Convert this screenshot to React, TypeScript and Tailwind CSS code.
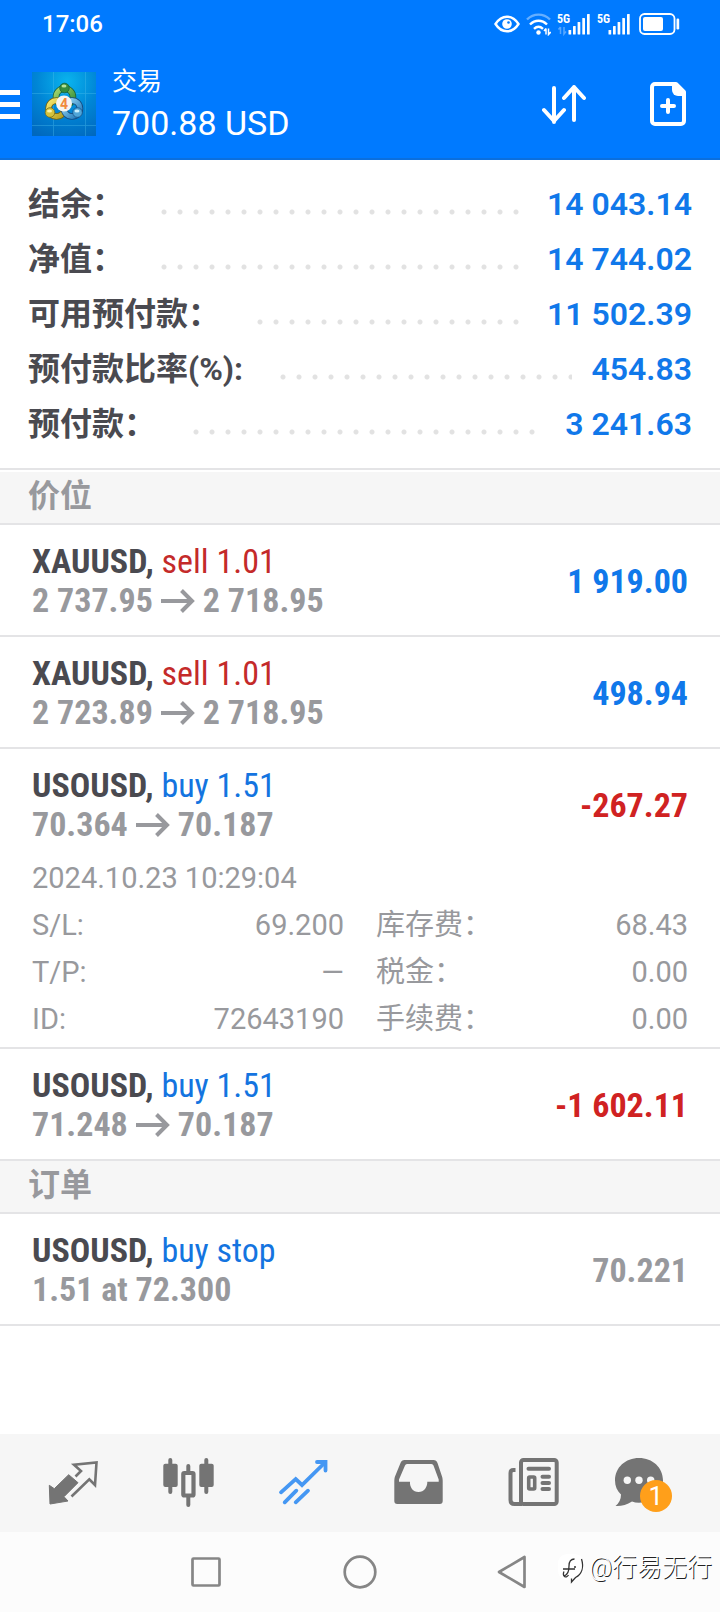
import type { ReactNode } from "react";

const summary = [
  { label: "结余：", value: "14 043.14" },
  { label: "净值：", value: "14 744.02" },
  { label: "可用预付款：", value: "11 502.39" },
  { label: "预付款比率(%):", value: "454.83" },
  { label: "预付款：", value: "3 241.63" },
];

type Position = {
  id: string;
  symbol: string;
  side: "buy" | "sell";
  volume: string;
  open: string;
  current: string;
  profit: string;
  details?: { time: string; rows: string[][] };
};

const positions: Position[] = [
  { id: "p1", symbol: "XAUUSD", side: "sell", volume: "1.01", open: "2 737.95", current: "2 718.95", profit: "1 919.00" },
  { id: "p2", symbol: "XAUUSD", side: "sell", volume: "1.01", open: "2 723.89", current: "2 718.95", profit: "498.94" },
  {
    id: "p3",
    symbol: "USOUSD",
    side: "buy",
    volume: "1.51",
    open: "70.364",
    current: "70.187",
    profit: "-267.27",
    details: {
      time: "2024.10.23 10:29:04",
      rows: [
        ["S/L:", "69.200", "库存费：", "68.43"],
        ["T/P:", "—", "税金：", "0.00"],
        ["ID:", "72643190", "手续费：", "0.00"],
      ],
    },
  },
  { id: "p4", symbol: "USOUSD", side: "buy", volume: "1.51", open: "71.248", current: "70.187", profit: "-1 602.11" },
];

function Signal({ data = false }: { data?: boolean }) {
  return (
    <svg width="34" height="24" viewBox="0 0 34 24" fill="currentColor" aria-hidden="true">
      <text x="0" y="11" fontSize="12" fontWeight="700" className="font-['Roboto_Condensed','Roboto',sans-serif]">
        5G
      </text>
      {data && (
        <path d="M3.500 15v7M3.500 15l-2 2.500M7 15v7l2-2.500" stroke="currentColor" strokeWidth="1.500" fill="none" opacity="0.350" />
      )}
      <rect x="11.500" y="18" width="2.700" height="4.500" rx="0.600" />
      <rect x="16" y="14" width="2.700" height="8.500" rx="0.600" />
      <rect x="20.600" y="10" width="2.700" height="12.500" rx="0.600" />
      <rect x="25.300" y="6" width="2.700" height="16.500" rx="0.600" />
      <rect x="30" y="2" width="2.700" height="20.500" rx="0.600" />
    </svg>
  );
}

function StatusBar() {
  return (
    <div className="flex h-12 items-center justify-between pl-[42px] pr-10">
      <span className="text-2xl font-medium">17:06</span>
      <div className="flex items-center gap-[6px]">
        <svg width="26" height="24" viewBox="0 0 26 24" fill="none" aria-hidden="true">
          <path d="M1.500 12C5 6.500 9 4.700 13 4.700S21 6.500 24.500 12C21 17.500 17 19.300 13 19.300S5 17.500 1.500 12Z" stroke="currentColor" strokeWidth="2.400" />
          <circle cx="13" cy="12" r="4.800" fill="currentColor" />
          <circle cx="14.500" cy="10.500" r="1.300" fill="#007aff" />
        </svg>
        <svg width="25" height="24" viewBox="0 0 25 24" fill="none" stroke="currentColor" aria-hidden="true">
          <path d="M1 7.500C7.500 1 17.500 1 24 7.500" strokeWidth="2.400" opacity="0.400" />
          <path d="M4 12.500C9 7.500 16 7.500 21 12.500" strokeWidth="2.400" />
          <path d="M8 16.800C11 14 14 14 17 16.800" strokeWidth="2.400" />
          <circle cx="12.500" cy="20.500" r="2.200" fill="currentColor" stroke="none" />
          <path d="M20 16.500v6M20 16.500l-2 2.500M22.500 16.500v6l2.300-2.500" strokeWidth="1.500" />
        </svg>
        <Signal data />
        <Signal />
        <svg className="ml-[2px]" width="41" height="24" viewBox="0 0 41 24" aria-hidden="true">
          <rect x="1" y="2" width="34.500" height="20" rx="4.500" fill="none" stroke="currentColor" strokeWidth="1.800" />
          <rect x="4" y="5" width="20" height="14" rx="2" fill="currentColor" />
          <rect x="37.500" y="6.500" width="2.700" height="11" rx="1.200" fill="currentColor" />
        </svg>
      </div>
    </div>
  );
}

function AppLogo() {
  return (
    <svg width="64" height="64" viewBox="0 0 64 64" aria-hidden="true">
      <defs>
        <radialGradient id="sky" cx="0.550" cy="0.150" r="0.950">
          <stop offset="0" stopColor="#0ab4ee" />
          <stop offset="0.500" stopColor="#0086d6" />
          <stop offset="1" stopColor="#0068be" />
        </radialGradient>
        <linearGradient id="leaf" x1="0" y1="0" x2="1" y2="1">
          <stop offset="0" stopColor="#a5d66e" />
          <stop offset="1" stopColor="#2a8a35" />
        </linearGradient>
        <linearGradient id="gold" x1="0" y1="0" x2="1" y2="1">
          <stop offset="0" stopColor="#f4e66c" />
          <stop offset="1" stopColor="#b39d1e" />
        </linearGradient>
        <linearGradient id="sea" x1="0" y1="0" x2="1" y2="1">
          <stop offset="0" stopColor="#9cdcf7" />
          <stop offset="1" stopColor="#1c74b8" />
        </linearGradient>
      </defs>
      <rect width="64" height="64" fill="url(#sky)" />
      <path d="M21.500 0v64M53.500 0v64M0 21.500h64M0 53.500h64" stroke="#4fc0ee" strokeWidth="0.800" opacity="0.450" />
      <g fill="none">
        <circle cx="32.500" cy="25" r="8.500" stroke="#155c35" strokeWidth="6.500" />
        <circle cx="32.500" cy="25" r="8.500" stroke="url(#leaf)" strokeWidth="5" />
        <circle cx="24.500" cy="36.500" r="8" stroke="#6f6415" strokeWidth="6.500" />
        <circle cx="24.500" cy="36.500" r="8" stroke="url(#gold)" strokeWidth="5" />
        <circle cx="40" cy="36.500" r="8" stroke="#164a80" strokeWidth="6.500" />
        <circle cx="40" cy="36.500" r="8" stroke="url(#sea)" strokeWidth="5" />
      </g>
      <circle cx="32.500" cy="16" r="4.800" fill="#358c3d" stroke="#155c35" strokeWidth="0.700" />
      <ellipse cx="32" cy="14" rx="2.500" ry="1.500" fill="#b9e39a" />
      <circle cx="18" cy="40.500" r="4.800" fill="#d4c23c" stroke="#6f6415" strokeWidth="0.700" />
      <ellipse cx="17.500" cy="39" rx="2.500" ry="1.500" fill="#fbf4a6" />
      <circle cx="45.500" cy="40.500" r="4.800" fill="#4fa5d8" stroke="#164a80" strokeWidth="0.700" />
      <ellipse cx="45" cy="39" rx="2.500" ry="1.500" fill="#c9eefc" />
      <circle cx="32" cy="31.500" r="8" fill="#f6f4f0" />
      <text x="32" y="36.500" textAnchor="middle" fontSize="14" fontWeight="700" fill="#f08a3c" className="font-['Roboto',sans-serif]">
        4
      </text>
    </svg>
  );
}

function Header() {
  return (
    <header className="border-b-2 border-[#0b6fdd] bg-[#007aff] text-white">
      <StatusBar />
      <div className="flex h-[110px] items-center pr-[34px] pt-[2px]">
        <button type="button" aria-label="Menu" className="flex w-5 flex-col gap-[7px]">
          <span className="h-[5px] w-full bg-white" />
          <span className="h-[5px] w-full bg-white" />
          <span className="h-[5px] w-full bg-white" />
        </button>
        <div className="ml-3">
          <AppLogo />
        </div>
        <div className="ml-4 flex-1 pt-[2px]">
          <h1 className="text-[25px] leading-9">交易</h1>
          <p className="text-[34px] leading-[46px]">700.88 USD</p>
        </div>
        <button type="button" aria-label="Sort">
          <svg width="44" height="44" viewBox="0 0 44 44" fill="none" stroke="currentColor" strokeWidth="4" strokeLinecap="round" strokeLinejoin="round">
            <path d="M12 6v34M2 28l10 11 10-11" />
            <path d="M32 38V5M22 16L32 5l10 11" />
          </svg>
        </button>
        <button type="button" aria-label="New order" className="ml-16">
          <svg width="36" height="44" viewBox="0 0 36 44" fill="none">
            <path d="M5 2H26L34 10V39a3 3 0 0 1-3 3H5a3 3 0 0 1-3-3V5a3 3 0 0 1 3-3Z" stroke="currentColor" strokeWidth="4" strokeLinejoin="round" />
            <path d="M22 2v6a6 6 0 0 0 6 6h7V10L27 2Z" fill="currentColor" />
            <path d="M18 18v12M12 24h12" stroke="currentColor" strokeWidth="4" strokeLinecap="round" />
          </svg>
        </button>
      </div>
    </header>
  );
}

function SectionTitle({ children }: { children: ReactNode }) {
  return (
    <h2 className="h-[53px] border-b-2 border-[#e4e4e6] bg-[#f6f6f6] px-7 text-[32px] font-bold leading-[49px] text-[#98999d]">
      {children}
    </h2>
  );
}

function Summary() {
  return (
    <dl className="border-b-2 border-[#e4e4e6] px-7 pb-4 pt-[17px]">
      {summary.map((row) => (
        <div key={row.label} className="flex h-[55px] items-center text-[32px] leading-[55px]">
          <dt className="font-bold text-[#4a4a50]">{row.label}</dt>
          <div className="ml-8 mr-5 mt-3.5 h-4 flex-1 bg-[radial-gradient(circle,#e2e2e2_2px,transparent_3px)] bg-[length:16px_16px]" />
          <dd className="font-semibold text-[#1078ea]">{row.value}</dd>
        </div>
      ))}
    </dl>
  );
}

function PriceArrow() {
  return (
    <svg width="34" height="24" viewBox="0 0 34 24" fill="none" stroke="currentColor" strokeWidth="4" aria-hidden="true">
      <path d="M0 12h31M20.500 1.500L31 12 20.500 22.500" />
    </svg>
  );
}

function PositionRow({ item }: { item: Position }) {
  const loss = item.profit.startsWith("-");
  return (
    <li className="border-b-2 border-[#e4e4e6] px-8">
      <div className="flex h-[110px] items-center justify-between pt-[2px] font-['Roboto_Condensed','Roboto',sans-serif] text-[34px] leading-[39px]">
        <div>
          <p>
            <span className="font-bold text-[#4a4a50]">{item.symbol}, </span>
            <span className={item.side === "buy" ? "text-[#1474e0]" : "text-[#c42a2a]"}>
              {item.side} {item.volume}
            </span>
          </p>
          <p className="flex items-center gap-2 font-bold text-[#98999d]">
            {item.open}
            <PriceArrow />
            {item.current}
          </p>
        </div>
        <span className={loss ? "font-bold text-[#d02222]" : "font-bold text-[#1078ea]"}>{item.profit}</span>
      </div>
      {item.details && (
        <div className="pb-1 text-[29px] leading-[47px] text-[#98999d]">
          <p className="-mt-1">{item.details.time}</p>
          <table className="w-full table-fixed">
            <tbody>
              {item.details.rows.map(([name, value, fee, amount]) => (
                <tr key={name}>
                  <th scope="row" className="w-[18%] p-0 text-left font-normal">{name}</th>
                  <td className="p-0 pr-4 text-right">{value}</td>
                  <th scope="row" className="p-0 pl-4 text-left font-normal">{fee}</th>
                  <td className="w-[18%] p-0 text-right">{amount}</td>
                </tr>
              ))}
            </tbody>
          </table>
        </div>
      )}
    </li>
  );
}

const tabs = [
  {
    name: "Quotes",
    icon: (
      <>
        <path d="M8.300 34.300L13.300 37.700 27.700 23.700 37 31.700 23 45.700 27 50 9 53Z" fill="currentColor" stroke="currentColor" strokeLinejoin="round" />
        <path d="M34.500 25.500L40 20 33 13.700 55.500 11.500 54 34 48.300 28.300 30.500 45.500" stroke="currentColor" strokeWidth="2.600" />
      </>
    ),
  },
  {
    name: "Charts",
    icon: (
      <>
        <path d="M14.300 9v32M50.300 9v32M32.300 15v7M32.300 45v9" stroke="currentColor" strokeWidth="4" strokeLinecap="round" />
        <rect x="7.300" y="12.700" width="14.400" height="23.300" rx="2" fill="currentColor" />
        <rect x="43.300" y="12.700" width="14.400" height="23.300" rx="2" fill="currentColor" />
        <rect x="27.300" y="22" width="10.200" height="22.500" rx="1" stroke="currentColor" strokeWidth="4.200" />
      </>
    ),
  },
  {
    name: "Trade",
    icon: (
      <g stroke="currentColor" strokeWidth="3.800" strokeLinecap="round" strokeLinejoin="miter">
        <path d="M10 41.300L24.700 28 31 34 54 11.500" />
        <path d="M46 11H54.500V19.500" />
        <path d="M13.700 51.300L25.300 39.700M24.700 51.300L37 39.700" />
      </g>
    ),
  },
  {
    name: "History",
    icon: (
      <path
        fillRule="evenodd"
        fill="currentColor"
        d="M19.500 9H48.500Q51.500 9 52.500 12L57.200 26Q57.700 28 57.700 30V50Q57.700 53 54.700 53H12.300Q9.300 53 9.300 50V30Q9.300 28 9.800 26L15.500 12Q16.500 9 19.500 9ZM22 13Q20.500 13 20 14.500L14 28.500V30.700H25C24.500 36 28 41 33.500 41S42.500 36 42.300 30.700H53.700V28.500L48.500 14.500Q48 13 46.500 13Z"
      />
    ),
  },
  {
    name: "News",
    icon: (
      <g stroke="currentColor" strokeWidth="4">
        <rect x="21" y="9" width="35.700" height="44" rx="2.500" />
        <path d="M15.500 19H13.500Q10.500 19 10.500 22V49Q10.500 53 14.500 53H22" />
        <path d="M28.500 17.700H49M42.500 25.700H49M42.500 32H49M42.500 38H49" strokeLinecap="round" />
        <rect x="28.700" y="26" width="6" height="12" rx="1" strokeWidth="3.600" />
      </g>
    ),
  },
  {
    name: "Messages",
    badge: 1,
    icon: (
      <>
        <path d="M24 7C37.500 7 48 16.500 48 29.300S37.500 51.700 24 51.700Q20 51.700 17 50.500Q9 55.500 0.500 55Q6 50.500 6 43.500C2 40 0 35 0 29.300C0 16.500 10.500 7 24 7Z" fill="currentColor" />
        <circle cx="12.300" cy="29.300" r="3.700" fill="#f6f6f6" />
        <circle cx="24" cy="29.300" r="3.700" fill="#f6f6f6" />
        <circle cx="35.700" cy="29.300" r="3.700" fill="#f6f6f6" />
      </>
    ),
  },
];

function TabBar() {
  return (
    <nav className="flex h-[98px] items-center bg-[#f6f6f6] px-4">
      {tabs.map((tab) => (
        <button
          key={tab.name}
          type="button"
          aria-label={tab.name}
          className={`flex flex-1 justify-center ${tab.name === "Trade" ? "text-[#4597f3]" : "text-[#747474]"}`}
        >
          <span className="relative">
            <svg width="64" height="64" viewBox="0 0 64 64" fill="none">
              {tab.icon}
            </svg>
            {tab.badge && (
              <span className="absolute left-[25px] top-[29px] flex size-8 items-center justify-center rounded-full bg-[#ff9f1a] text-[26px] leading-8 text-white">
                {tab.badge}
              </span>
            )}
          </span>
        </button>
      ))}
    </nav>
  );
}

function SystemNav() {
  return (
    <div className="relative flex h-20 items-center justify-center gap-[118px] bg-[#fcfcfc] text-[#868686]">
      <button type="button" aria-label="Recent apps">
        <svg width="36" height="36" viewBox="0 0 36 36" fill="none" stroke="currentColor" strokeWidth="2.700">
          <rect x="4.500" y="4.500" width="27" height="27" rx="1" />
        </svg>
      </button>
      <button type="button" aria-label="Home">
        <svg width="36" height="36" viewBox="0 0 36 36" fill="none" stroke="currentColor" strokeWidth="2.700">
          <circle cx="18" cy="18" r="15.300" />
        </svg>
      </button>
      <button type="button" aria-label="Back">
        <svg width="36" height="36" viewBox="0 0 36 36" fill="none" stroke="currentColor" strokeWidth="2.700" strokeLinejoin="round">
          <path d="M3 18L28.500 3V33Z" />
        </svg>
      </button>
      <div className="absolute right-2 top-5 flex items-center gap-1 text-white">
        <svg width="28" height="32" viewBox="0 0 28 32" fill="none" aria-hidden="true">
          <rect x="1" y="2" width="26" height="26" rx="9" fill="#ffffff" />
          <path d="M7 24C11 23 12 20 12 14C12 9 14 7 17.500 7M6 17H18M24.500 7C27 15 25 22 18.500 25.500L14.500 30V26.500" stroke="#333333" strokeWidth="1.300" />
          <path d="M7 19.500C5 24 9 27 11.500 23" stroke="#333333" strokeWidth="1.300" />
          <circle cx="18" cy="15" r="1" fill="#333333" />
        </svg>
        <span className="text-[25px] font-light leading-8 [text-shadow:1px_1px_0_#222222]">@行易无行</span>
      </div>
    </div>
  );
}

export default function App() {
  return (
    <div className="flex min-h-screen flex-col bg-white font-['Roboto','Noto_Sans_CJK_SC',sans-serif]">
      <Header />
      <main className="flex-1">
        <Summary />
        <div className="pt-[2px]">
          <SectionTitle>价位</SectionTitle>
        </div>
        <ul>
          {positions.map((item) => (
            <PositionRow key={item.id} item={item} />
          ))}
        </ul>
        <SectionTitle>订单</SectionTitle>
        <div className="flex h-28 items-center justify-between border-b-2 border-[#e4e4e6] px-8 pt-[2px] font-['Roboto_Condensed','Roboto',sans-serif] text-[34px] font-bold leading-[39px] text-[#98999d]">
          <div>
            <p>
              <span className="text-[#4a4a50]">USOUSD, </span>
              <span className="font-normal text-[#1474e0]">buy stop</span>
            </p>
            <p>1.51 at 72.300</p>
          </div>
          <span>70.221</span>
        </div>
      </main>
      <TabBar />
      <SystemNav />
    </div>
  );
}
